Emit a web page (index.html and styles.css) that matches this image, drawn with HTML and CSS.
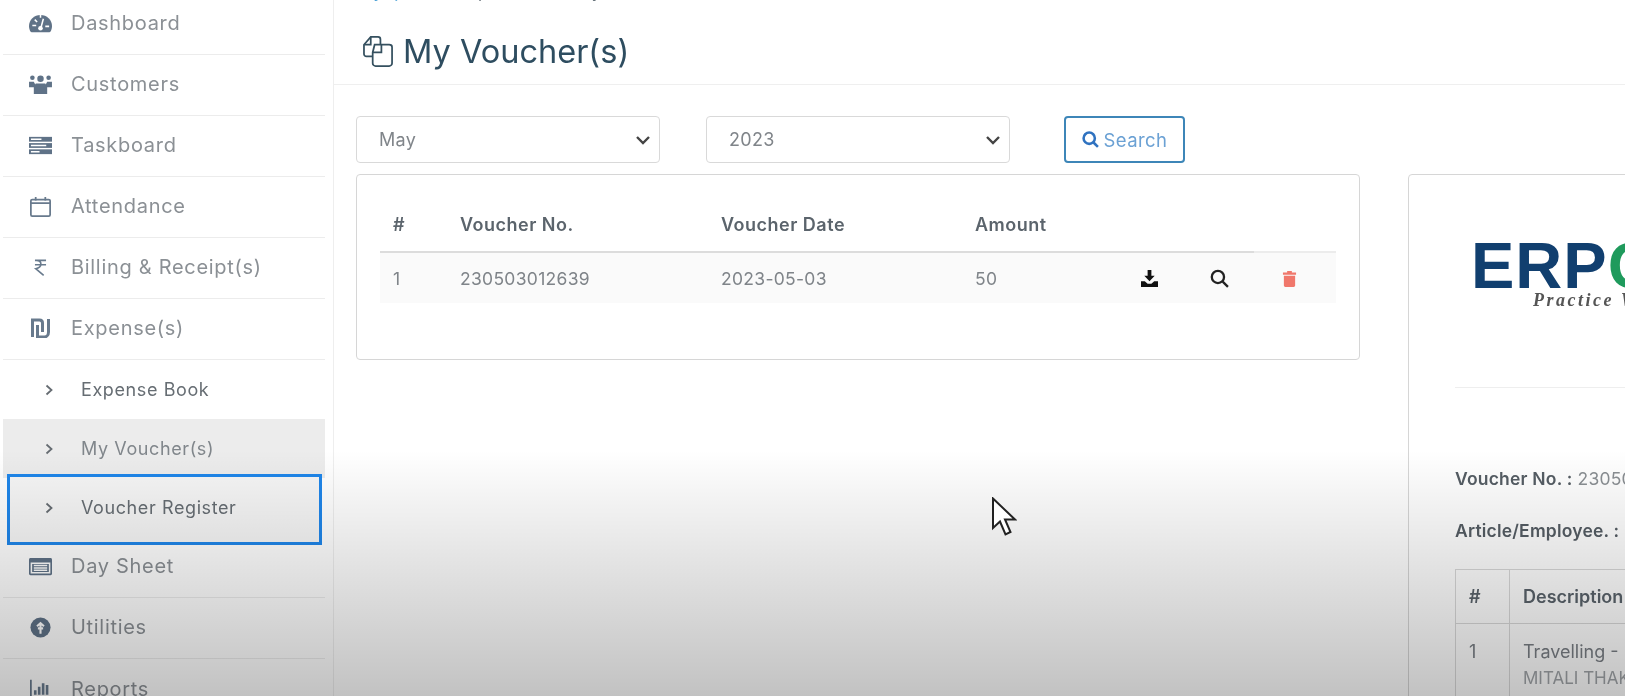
FILE: index.html
```html
<!DOCTYPE html>
<html lang="en">
<head>
<meta charset="utf-8">
<title>My Voucher(s)</title>
<link rel="stylesheet" href="styles.css">
</head>
<body>
<div class="app">
  <aside class="sidebar">
    <ul class="nav">
      <li class="nav-item"><svg class="nav-icon" viewBox="0 0 24 20"><path d="M12 1C5.400 1 0 6 0 12.500c0 2.200.6 4.300 1.700 6.100.3.300.6.400 1 .400h18.600c.4 0 .7-.1 1-.4 1.100-1.800 1.700-3.900 1.700-6.100C24 6 18.600 1 12 1z"/><path class="cut" d="M12 16l3-11M3.500 12h4M17 13h4M6 6l2.500 2.500M12 1v3"/><circle class="dot" cx="12" cy="15" r="2.400"/></svg><span>Dashboard</span></li>
      <li class="nav-item"><svg class="nav-icon" viewBox="0 0 24 22"><circle cx="12" cy="5" r="3.400"/><circle cx="3.500" cy="4" r="2.400"/><circle cx="20.500" cy="4" r="2.400"/><path d="M0 8h5l1.500 3v3H0zM24 8h-5l-1.500 3v3H24z"/><path d="M7 10h10l2 3v8H5v-8z"/></svg><span>Customers</span></li>
      <li class="nav-item"><svg class="nav-icon" viewBox="0 0 24 20"><rect y="1" width="24" height="5"/><rect y="7.500" width="24" height="5"/><rect y="14" width="24" height="5"/><path class="cut" d="M2 3.500h11M2 10h16M2 16.500h9"/></svg><span>Taskboard</span></li>
      <li class="nav-item"><svg class="nav-icon outline" viewBox="0 0 24 24"><rect x="1" y="4" width="22" height="19" rx="1.500"/><path d="M1 8h22M6.500 1v4M17.500 1v4"/></svg><span>Attendance</span></li>
      <li class="nav-item"><svg class="nav-icon outline narrow" viewBox="0 0 24 24"><path d="M5 3h14M5 8.500h14M7 3c7 0 8 9-1 10.500L16 22"/></svg><span>Billing &amp; Receipt(s)</span></li>
      <li class="nav-item"><svg class="nav-icon outline thick shekel" viewBox="0 0 20 20"><path d="M2 19V2h7c2 0 3 1 3 3v9M18 1v13c0 3-2 5-4 5H7V7"/></svg><span>Expense(s)</span></li>
      <li class="sub-item"><svg class="chevron" viewBox="0 0 8 12"><path d="M1.500 1.500L6.500 6l-5 4.500"/></svg><span>Expense Book</span></li>
      <li class="sub-item is-current"><svg class="chevron" viewBox="0 0 8 12"><path d="M1.500 1.500L6.500 6l-5 4.500"/></svg><span>My Voucher(s)</span></li>
      <li class="sub-item is-focused"><svg class="chevron" viewBox="0 0 8 12"><path d="M1.500 1.500L6.500 6l-5 4.500"/></svg><span>Voucher Register</span></li>
      <li class="nav-item"><svg class="nav-icon" viewBox="0 0 24 20"><path d="M1.500 1h21c.8 0 1.500.7 1.500 1.500v15c0 .8-.7 1.500-1.500 1.500h-21C.7 19 0 18.300 0 17.500v-15C0 1.700.7 1 1.500 1z"/><path class="cut" d="M2.500 6.500h19v10h-19zM5 9h14M5 11.500h14M5 14h14"/></svg><span>Day Sheet</span></li>
      <li class="nav-item"><svg class="nav-icon" viewBox="0 0 24 24"><circle cx="12" cy="12" r="11.500"/><path class="cut thick-cut" d="M12 19V7M8 10.500L12 7l4 3.500M9 13h6"/></svg><span>Utilities</span></li>
      <li class="nav-item"><svg class="nav-icon outline" viewBox="0 0 24 24"><path d="M1 2v20h23"/><path class="bars" d="M6 19v-5M10.500 19V10M15 19V6M19.500 19V8"/></svg><span>Reports</span></li>
    </ul>
  </aside>

  <main class="main">
    <p class="crumbs"><span class="crumb-link">Myspace</span> / Expense(s) / My Voucher(s)</p>
    <header class="page-head">
      <svg class="title-icon" viewBox="0 0 32 32"><path d="M10 21H3.500C2.100 21 1 19.900 1 18.500V9l7-8h7.500C17 1 18 2 18 3.500V9"/><path d="M8 1v8H1"/><path d="M12 9h15c1.500 0 3 1 3 2.500V28c0 1.500-1.500 3-3 3H13c-1.500 0-3-1.500-3-3V17z"/><path d="M19 9v8h-9"/></svg>
      <h1 class="page-title">My Voucher(s)</h1>
    </header>

    <form class="filters">
      <select class="field"><option>May</option></select>
      <select class="field"><option>2023</option></select>
      <button class="search-btn" type="button"><svg class="search-icon" viewBox="0 0 16 16"><circle cx="6.800" cy="6.800" r="5.300"/><path d="M10.800 10.800L15 15"/></svg>Search</button>
    </form>

    <div class="cards">
      <section class="card list-card">
        <table class="vouchers">
          <thead>
            <tr><th class="c-num">#</th><th class="c-no">Voucher No.</th><th class="c-date">Voucher Date</th><th class="c-amt">Amount</th><th class="c-act"></th><th class="c-act"></th><th class="c-act c-last"></th></tr>
          </thead>
          <tbody>
            <tr>
              <td>1</td><td>230503012639</td><td>2023-05-03</td><td>50</td>
              <td class="act"><svg class="act-icon" viewBox="0 0 18 18"><path d="M7 0h4v6h3.500L9 12 3.500 6H7z"/><path d="M0 12h4l3 2.500h4l3-2.500h4v6H0z"/></svg></td>
              <td class="act"><svg class="act-icon stroke" viewBox="0 0 18 18"><circle cx="7.500" cy="7.500" r="5.800"/><path d="M12 12l5 5"/></svg></td>
              <td class="act c-last"><svg class="act-icon trash" viewBox="0 0 16 18"><path d="M1 2.500h14V5H1zM5.500 1h5v2h-5z"/><path d="M2 6h12v10.500c0 .8-.7 1.500-1.500 1.500h-9C2.700 18 2 17.300 2 16.500z"/></svg></td>
            </tr>
          </tbody>
        </table>
      </section>

      <section class="card detail-card">
        <div class="logo"><span class="logo-main">ERP<span class="logo-accent">C</span></span><span class="logo-tag">Practice Work</span></div>
        <p class="meta first"><b>Voucher No. :</b> 230503012639</p>
        <p class="meta"><b>Article/Employee. :</b> MITALI THAKKAR</p>
        <table class="lines">
          <thead><tr><th class="l-num">#</th><th>Description</th></tr></thead>
          <tbody><tr><td>1</td><td>Travelling - Local<br><span class="muted">MITALI THAKKAR</span></td></tr></tbody>
        </table>
      </section>
    </div>
  </main>
</div>
<div class="shade"></div>
<svg class="cursor" viewBox="0 0 26 40"><path d="M2 1.500V31l7-6.500 5.500 13 5-2.500-5.500-12.500H24z"/></svg>
</body>
</html>
```

FILE: styles.css
```css
* { box-sizing: border-box; }
html, body { margin: 0; height: 696px; overflow: hidden; background: #fff; }
body { position: relative; font-family: Inter, "Liberation Sans", sans-serif; color: #7a7f85; }

.app { display: flex; height: 696px; overflow: hidden; filter: blur(0.6px); }

/* Sidebar */
.sidebar { flex: none; width: 334px; border-right: 1px solid #eeeeee; padding-left: 3px; }
.nav { list-style: none; margin: -6px 0 0; padding: 0; width: 322px; }
.nav-item { height: 61px; padding: 0 0 2px 26px; display: flex; align-items: center; gap: 19px; border-bottom: 1px solid #ececec; font-size: 20px; letter-spacing: 0.7px; color: #8b9095; }
.nav-item:last-child { border-bottom: 0; }
.nav-icon { flex: none; width: 23px; height: 21px; fill: #5f7287; }
.nav-icon .cut { fill: none; stroke: #fff; stroke-width: 1.600; }
.nav-icon .thick-cut { stroke-width: 2.400; }
.nav-icon .dot { fill: #fff; }
.nav-icon.outline { fill: none; stroke: #687a8d; stroke-width: 2; }
.nav-icon.thick { stroke-width: 3; }
.nav-icon .bars { stroke-width: 3; }
.nav-icon.narrow { height: 19px; }
.nav-icon.shekel { height: 20px; }

.sub-item { position: relative; isolation: isolate; height: 59px; display: flex; align-items: center; gap: 28px; padding-left: 42px; font-size: 18px; letter-spacing: 0.6px; color: #666d73; }
.chevron { flex: none; width: 8px; height: 12px; fill: none; stroke: #666c72; stroke-width: 1.800; }
.sub-item.is-current { background: #ececec; color: #80868b; }
.sub-item.is-focused::before { content: ""; position: absolute; z-index: -1; left: 4px; right: 3px; top: -4px; bottom: -8px; background: #f6f6f6; border: 3px solid #1f86ea; }

/* Main column */
.main { flex: 1; min-width: 0; overflow: hidden; }
.crumbs { margin: -17px 0 0 22px; height: 16px; line-height: 16px; font-size: 19px; white-space: nowrap; color: #56636c; }
.crumb-link { color: #3e9bd4; }
.page-head { display: flex; align-items: center; gap: 9px; height: 86px; padding: 20px 0 0 29px; border-bottom: 1px solid #efefef; }
.title-icon { flex: none; width: 31px; height: 31px; fill: none; stroke: #35505f; stroke-width: 1.800; }
.page-title { margin: 0; font-size: 32.500px; line-height: 40px; font-weight: 400; color: #2e4d60; }

.filters { display: flex; align-items: stretch; height: 47px; margin: 31px 0 11px 22px; }
.field { appearance: none; width: 304px; margin-right: 46px; padding: 0 22px; border: 1px solid #d9d9d9; border-radius: 4px; background: #fff url("data:image/svg+xml,%3Csvg xmlns='http://www.w3.org/2000/svg' viewBox='0 0 16 12'%3E%3Cpath d='M2 3l6 6 6-6' fill='none' stroke='%23444' stroke-width='2.400'/%3E%3C/svg%3E") no-repeat right 8px center / 16px 12px; font: inherit; font-size: 18px; letter-spacing: 0.3px; color: #80858a; }
.search-btn { width: 121px; margin-left: 8px; display: flex; align-items: center; justify-content: center; gap: 5px; padding: 0; border: 2px solid #3d86b8; border-radius: 4px; background: #fff; font: inherit; font-size: 18.500px; letter-spacing: 0.4px; color: #6ba1d4; }
.search-icon { width: 17px; height: 17px; fill: none; stroke: #2f72c0; stroke-width: 2.400; }

.cards { display: flex; gap: 48px; margin-left: 22px; }
.card { flex: none; border: 1px solid #d6d6d6; border-radius: 4px; background: #fff; }
.list-card { width: 1004px; height: 186px; padding: 0 23px; }

.vouchers { width: 956px; border-collapse: collapse; table-layout: fixed; font-size: 17.500px; letter-spacing: 0.3px; }
.vouchers th { height: 77px; padding: 22px 0 0; text-align: left; font-size: 18px; letter-spacing: 0.5px; font-weight: 600; color: #5b646c; border-bottom: 2px solid #dcdcdc; }
.vouchers th.c-last { border-bottom-color: #ececec; }
.vouchers td { height: 51px; padding: 0; background: #fafafa; color: #7f8489; }
.vouchers th:first-child, .vouchers td:first-child { padding-left: 13px; }
.c-num { width: 80px; }
.c-no { width: 261px; }
.c-date { width: 254px; }
.c-amt { width: 139px; }
.c-act { width: 70px; }
.c-act.c-last { width: 82px; }
.act { text-align: center; }
.act.c-last { padding-right: 12px; }
.act-icon { display: block; margin: 0 auto; width: 17px; height: 17px; fill: #111; }
.act-icon.stroke { width: 19px; height: 19px; fill: none; stroke: #222; stroke-width: 2.200; }
.act-icon.trash { width: 15px; fill: #f0776b; }

.detail-card { width: 400px; height: 700px; padding: 0 0 0 46px; }
.logo { height: 213px; border-bottom: 1px solid #eeeeee; padding-top: 65px; white-space: nowrap; overflow: hidden; }
.logo-main { display: block; height: 52px; line-height: 52px; margin-left: 16px; font-family: "Liberation Sans", sans-serif; font-weight: 700; font-size: 65px; letter-spacing: 1px; color: #113f6f; }
.logo-accent { color: #1f9a5c; }
.logo-tag { display: block; height: 14px; line-height: 14px; margin: 1px 0 0 78px; font-family: "Liberation Serif", serif; font-style: italic; font-weight: 700; font-size: 18px; letter-spacing: 2.500px; color: #555; }
.meta { margin: 0; height: 52px; line-height: 24px; font-size: 17.500px; letter-spacing: 0.2px; color: #8a8f93; white-space: nowrap; }
.meta.first { margin-top: 79px; }
.meta b { font-weight: 600; color: #555d64; }
.lines { width: 500px; margin-top: -2px; border-collapse: collapse; font-size: 18px; }
.lines th, .lines td { border: 1px solid #d9d9d9; padding: 0 0 0 13px; text-align: left; }
.lines th { height: 54px; font-weight: 600; color: #5b646c; }
.lines td { height: 120px; line-height: 26px; vertical-align: top; padding-top: 15px; color: #7a7f85; white-space: nowrap; }
.lines .l-num { width: 54px; }
.muted { font-size: 17px; color: #a0a4a8; }

/* Things lying over the page */
.shade { position: absolute; left: 0; right: 0; bottom: 0; height: 246px; background: linear-gradient(to bottom, rgba(0,0,0,0), rgba(0,0,0,.24)); pointer-events: none; }
.cursor { position: absolute; left: 991px; top: 497px; width: 26px; height: 40px; fill: #fff; stroke: #222; stroke-width: 2; }
```
